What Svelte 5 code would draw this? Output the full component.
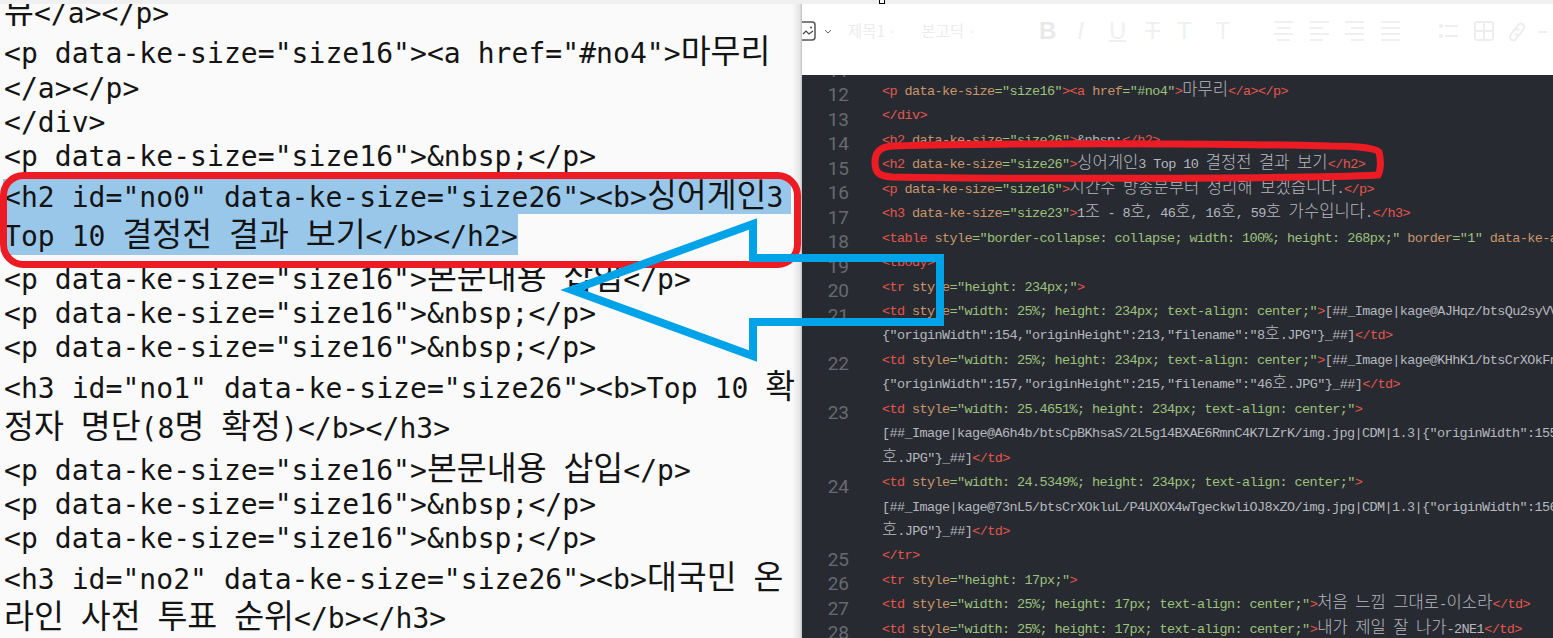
<script>
  const hangul = /([\uAC00-\uD7A3]+)/;
  const runs = (s) => s.split(hangul).filter(Boolean).map((t) => ({ t, k: hangul.test(t) }));

  // Colour one visual row of source: tags red, attribute names orange, values green.
  function hl(src) {
    const out = [];
    const re = /(<\/?[a-z0-9]+)|(>)|("[^"]*")|(=)|([a-z-]+)(?==)/g;
    const push = (c, t) => t && out.push({ c, t });
    for (const p of src.split(/(<[^>]*>?)/)) {
      if (p.startsWith('<')) {
        let i = 0;
        for (const m of p.matchAll(re)) {
          push('plain', p.slice(i, m.index));
          if (m[1] || m[2]) push('tag', m[0]);
          else if (m[3] || m[4]) push('str', m[0]);
          else push('attr', m[0]);
          i = m.index + m[0].length;
        }
        push('plain', p.slice(i));
      } else {
        push('tx', p);
      }
    }
    return out;
  }

  const source = [
    { gap: 0, t: '뷰</a></p>' },
    { gap: 6, t: '<p data-ke-size="size16"><a href="#no4">마무리' },
    { gap: 1, t: '</a></p>' },
    { gap: 0, t: '</div>' },
    { gap: 0, t: '<p data-ke-size="size16">&nbsp;</p>' },
    { gap: 7, t: '<h2 id="no0" data-ke-size="size26"><b>싱어게인3', sel: 'a' },
    { gap: 5, t: 'Top 10 결정전 결과 보기</b></h2>', sel: 'b' },
    { gap: 9, t: '<p data-ke-size="size16">본문내용 삽입</p>' },
    { gap: 0, t: '<p data-ke-size="size16">&nbsp;</p>' },
    { gap: 0, t: '<p data-ke-size="size16">&nbsp;</p>' },
    { gap: 7, t: '<h3 id="no1" data-ke-size="size26"><b>Top 10 확' },
    { gap: 6, t: '정자 명단(8명 확정)</b></h3>' },
    { gap: 8, t: '<p data-ke-size="size16">본문내용 삽입</p>' },
    { gap: 0, t: '<p data-ke-size="size16">&nbsp;</p>' },
    { gap: 0, t: '<p data-ke-size="size16">&nbsp;</p>' },
    { gap: 7, t: '<h3 id="no2" data-ke-size="size26"><b>대국민 온' },
    { gap: 5, t: '라인 사전 투표 순위</b></h3>' }
  ];

  const td = (w, h) => `<td style="width: ${w}; height: ${h}; text-align: center;">`;

  const code = [
    { n: 11, rows: [''] },
    { n: 12, rows: ['<p data-ke-size="size16"><a href="#no4">마무리</a></p>'] },
    { n: 13, rows: ['</div>'] },
    { n: 14, rows: ['<h2 data-ke-size="size26">&nbsp;</h2>'] },
    { n: 15, rows: ['<h2 data-ke-size="size26">싱어게인3 Top 10 결정전 결과 보기</h2>'] },
    { n: 16, rows: ['<p data-ke-size="size16">시간수 방송분부터 정리해 보겠습니다.</p>'] },
    { n: 17, rows: ['<h3 data-ke-size="size23">1조 - 8호, 46호, 16호, 59호 가수입니다.</h3>'] },
    { n: 18, rows: ['<table style="border-collapse: collapse; width: 100%; height: 268px;" border="1" data-ke-align="alignLeft">'] },
    { n: 19, rows: ['<tbody>'] },
    { n: 20, rows: ['<tr style="height: 234px;">'] },
    { n: 21, rows: [td('25%', '234px') + '[##_Image|kage@AJHqz/btsQu2syVV/abc', '{"originWidth":154,"originHeight":213,"filename":"8호.JPG"}_##]</td>'] },
    { n: 22, rows: [td('25%', '234px') + '[##_Image|kage@KHhK1/btsCrXOkFnf/abc', '{"originWidth":157,"originHeight":215,"filename":"46호.JPG"}_##]</td>'] },
    { n: 23, rows: [td('25.4651%', '234px'), '[##_Image|kage@A6h4b/btsCpBKhsaS/2L5g14BXAE6RmnC4K7LZrK/img.jpg|CDM|1.3|{"originWidth":155', '호.JPG"}_##]</td>'] },
    { n: 24, rows: [td('24.5349%', '234px'), '[##_Image|kage@73nL5/btsCrXOkluL/P4UXOX4wTgeckwliOJ8xZO/img.jpg|CDM|1.3|{"originWidth":156', '호.JPG"}_##]</td>'] },
    { n: 25, rows: ['</tr>'] },
    { n: 26, rows: ['<tr style="height: 17px;">'] },
    { n: 27, rows: [td('25%', '17px') + '처음 느낌 그대로-이소라</td>'] },
    { n: 28, rows: [td('25%', '17px') + '내가 제일 잘 나가-2NE1</td>'] }
  ];
</script>

<div class="page">
  <div class="strip"></div>
  <div class="body">
    <section class="source">
      {#each source as line}
        <div class="line" class:sel-a={line.sel === 'a'} class:sel-b={line.sel === 'b'} style:margin-top="{line.gap}px">
          {#each runs(line.t) as r}<span class:k={r.k}>{r.t}</span>{/each}
        </div>
      {/each}
    </section>

    <section class="editor">
      <div class="toolbar">
        <svg class="ic pic" width="14" height="20" viewBox="0 0 14 20"><path d="M0 1h10a3 3 0 0 1 3 3v12a3 3 0 0 1-3 3H0" fill="none" stroke="#555" stroke-width="1.5"/><path d="M1 13l3-3 3 3 4-3" fill="none" stroke="#444" stroke-width="1.2"/><circle cx="9" cy="6.5" r="1" fill="#444"/></svg>
        <svg class="ic chev" width="8" height="5" viewBox="0 0 8 5"><path d="M1 1l3 3 3-3" fill="none" stroke="#666" stroke-width="1"/></svg>
        <span class="sel-tx one">제목1</span>
        <svg class="ic dd" width="7" height="5" viewBox="0 0 8 5"><path d="M1 1l3 3 3-3" fill="none" stroke="#e8e8e8" stroke-width="1"/></svg>
        <span class="sel-tx two">본고딕</span>
        <svg class="ic dd" width="7" height="5" viewBox="0 0 8 5"><path d="M1 1l3 3 3-3" fill="none" stroke="#e8e8e8" stroke-width="1"/></svg>
        <span class="glyph b">B</span>
        <span class="glyph i">I</span>
        <span class="glyph u">U</span>
        <span class="glyph s">T</span>
        <span class="glyph t1">T</span>
        <span class="glyph t2">T</span>
        <div class="aligns">
          {#each ['M0 1h19M3 7h13M0 13h19M3 19h13', 'M0 1h19M0 7h13M0 13h19M0 19h13', 'M0 1h19M6 7h13M0 13h19M6 19h13', 'M0 1h19M0 7h19M0 13h19M0 19h19'] as d}
            <svg class="ic" width="19" height="20" viewBox="0 0 19 20"><path {d} stroke="#f0f0f0" stroke-width="2" fill="none"/></svg>
          {/each}
        </div>
        <svg class="ic list" width="19" height="20" viewBox="0 0 19 20"><path d="M6 5h13M6 15h13" stroke="#eee" stroke-width="2"/><circle cx="2" cy="5" r="2" fill="#eee"/><circle cx="2" cy="15" r="2" fill="#eee"/></svg>
        <svg class="ic table" width="20" height="20" viewBox="0 0 20 20"><rect x="1" y="1" width="18" height="18" rx="2" fill="none" stroke="#eee" stroke-width="2"/><path d="M10 1v18M1 10h18" stroke="#eee" stroke-width="2"/></svg>
        <svg class="ic link" width="20" height="22" viewBox="0 0 20 22"><path d="M8 8l4-5a3.5 3.5 0 0 1 5 4l-4 6a3.5 3.5 0 0 1-5 0M12 14l-4 5a3.5 3.5 0 0 1-5-4l4-6a3.5 3.5 0 0 1 5 0" fill="none" stroke="#eee" stroke-width="2"/></svg>
        <svg class="ic dash" width="8" height="2" viewBox="0 0 8 2"><path d="M0 1h8" stroke="#eee" stroke-width="2"/></svg>
      </div>

      <div class="codewrap">
        <div class="code">
          {#each code as block}
            <div class="block">
              <div class="num">{block.n}</div>
              <div class="rows">
                {#each block.rows as row}
                  <div class="row">
                    {#each hl(row) as tok}
                      <span class={tok.c}>{#each runs(tok.t) as r}<span class:k={r.k}>{r.t}</span>{/each}</span>
                    {/each}
                  </div>
                {/each}
              </div>
            </div>
          {/each}
        </div>
      </div>
    </section>
  </div>

  <svg class="notes" width="1553" height="638" viewBox="0 0 1553 638" fill="none">
    <rect x="3.5" y="175.5" width="794" height="89" rx="20" stroke="#ed1c24" stroke-width="7"/>
    <path d="M892 146C1000 143 1200 143 1330 146C1356 146 1376 148 1379 152C1381 160 1381 170 1378 175C1300 179 1000 179 892 177C878 176 875 172 875 162C875 152 880 147 892 146Z" stroke="#ed1c24" stroke-width="7"/>
    <path d="M572 290L753 224V258H940V322H753V356Z" stroke="#00a2e8" stroke-width="8"/>
  </svg>
  <div class="cursor"></div>
</div>

<style>
  :global(body) { margin: 0; }
  .page {
    position: relative;
    width: 1553px;
    height: 638px;
    overflow: hidden;
    background: #fff;
  }
  .strip { height: 4px; background: #f0f0f0; }
  .body { display: flex; height: 634px; }

  .source {
    width: 802px;
    flex: none;
    overflow: hidden;
    background: linear-gradient(to right, #fafafa 792px, #e4e4e4 800px, #bdbdbd 802px);
    padding-left: 4px;
    box-sizing: border-box;
    isolation: isolate;
    color: #141414;
    font: 28px/34px "DejaVu Sans Mono", "Noto Sans CJK KR", monospace;
    letter-spacing: 0.06px;
  }
  .source::before { content: ""; display: block; height: 0; margin-top: -7px; }
  .line { position: relative; height: 34px; white-space: pre; width: fit-content; }
  .line .k { font-family: "Noto Sans CJK KR", sans-serif; font-size: 32.5px; line-height: 0; letter-spacing: 0; }
  .sel-a::before, .sel-b::before {
    content: "";
    position: absolute;
    z-index: -1;
    left: -1px;
    right: 0;
    background: #99c7ea;
  }
  .sel-a { padding-right: 8px; }
  .sel-a::before { top: -2px; bottom: 1px; }
  .sel-b::before { top: -6px; bottom: -1px; }

  .editor { flex: 1; min-width: 0; display: flex; flex-direction: column; }
  .toolbar {
    height: 71px;
    flex: none;
    display: flex;
    align-items: flex-start;
    padding-top: 16px;
    box-sizing: border-box;
    background: #fff;
    overflow: hidden;
  }
  .ic { flex: none; display: block; }
  .pic { margin-top: 1px; }
  .chev { margin: 9px 0 0 8px; }
  .dd { margin: 9px 0 0 4px; }
  .sel-tx { font: 15.5px/20px "Noto Sans CJK KR", sans-serif; color: #ececec; }
  .one { margin-left: 16px; }
  .two { margin-left: 25px; }
  .glyph { font: 24px/22px "Liberation Sans", sans-serif; color: #f0f0f0; flex: none; }
  .b { font-weight: 700; color: #e9e9e9; margin-left: 64px; }
  .i { font-style: italic; margin-left: 21px; }
  .u { margin-left: 25px; text-decoration: underline; text-decoration-thickness: 2px; }
  .s { margin-left: 19px; text-decoration: line-through; }
  .t1 { margin-left: 17px; }
  .t2 { margin-left: 24px; }
  .aligns { display: flex; gap: 16.5px; margin-left: 44px; margin-top: 1px; }
  .list { margin: 1px 0 0 39px; }
  .table { margin: 1px 0 0 16px; }
  .link { margin: 1px 0 0 13px; }
  .dash { margin: 11px 0 0 12px; }

  .codewrap {
    flex: 1;
    min-height: 0;
    overflow: hidden;
    background: #282a31;
  }
  .code { margin-top: -19.5px; }
  .block { display: flex; }
  .num {
    width: 47px;
    flex: none;
    text-align: right;
    font: 19px/24.45px Roboto, sans-serif;
    color: #666a70;
    position: relative;
    top: 3.5px;
  }
  .rows { margin-left: 33px; min-width: 0; flex: 1; overflow: hidden; }
  .row {
    height: 24.45px;
    line-height: 24.45px;
    white-space: pre;
    font-family: "Liberation Mono", "Noto Sans CJK KR", monospace;
    font-size: 13.5px;
    letter-spacing: -0.6px;
    overflow: hidden;
  }
  .row .k { font-family: "Noto Sans CJK KR", sans-serif; font-size: 16.6px; font-weight: 300; letter-spacing: 0; line-height: 0; }
  .tag { color: #e2564c; }
  .attr, .plain { color: #c9966b; }
  .str { color: #9cc27c; }
  .tx { color: #b4b8be; }

  .notes { position: absolute; inset: 0; pointer-events: none; }
  .cursor {
    position: absolute;
    left: 879px;
    top: 0;
    width: 4px;
    height: 3px;
    border: 1px solid #000;
    border-top: 0;
    background: #fff;
  }
</style>
